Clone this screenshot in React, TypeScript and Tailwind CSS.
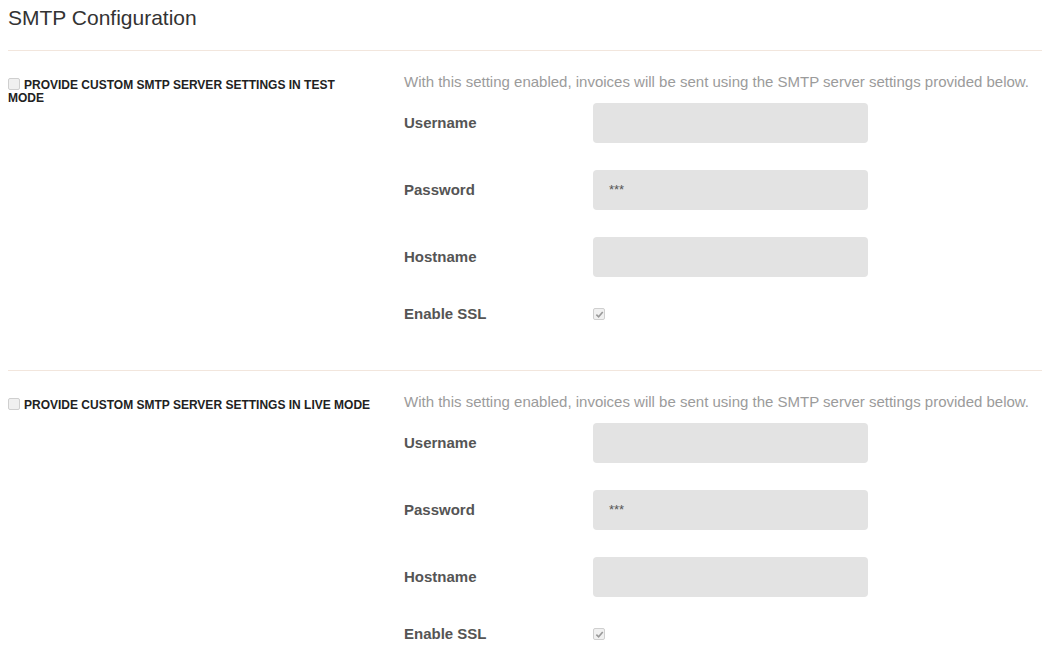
import React from "react";

const font = { fontFamily: '"Liberation Sans", Arial, Helvetica, sans-serif' };

function Box({ checked }: { checked?: boolean }) {
  return (
    <span className="inline-flex items-center justify-center w-[12px] h-[12px] border border-[#cfcfcf] bg-[#f0f0f0] rounded-[2px] align-[-1px]">
      {checked && (
        <svg width="9" height="9" viewBox="0 0 10 10">
          <path d="M1.5 5.2 L4 7.6 L8.6 2.2" fill="none" stroke="#9a9a9a" strokeWidth="1.8" />
        </svg>
      )}
    </span>
  );
}

function Row({ label, value }: { label: string; value?: string }) {
  return (
    <div className="flex items-center h-10">
      <div className="w-[189px] text-[15px] font-bold text-[#555]">{label}</div>
      <div className="w-[275px] h-10 bg-[#e3e3e3] rounded-[4px] flex items-center px-4 text-[13px] text-[#555]">
        {value}
      </div>
    </div>
  );
}

function Section({ mode }: { mode: string }) {
  return (
    <div className="border-t border-[#f2e6dd] flex pt-[21px] pb-[46px]">
      <div className="w-[396px] pr-[32px] pt-[6px]">
        <div className="text-[12px] leading-[13px] font-bold text-[#222] uppercase">
          <Box />
          <span className="ml-[4px]">Provide custom SMTP server settings in {mode} mode</span>
        </div>
      </div>
      <div className="flex-1">
        <div className="text-[15px] leading-5 text-[#9b9b9b]">
          With this setting enabled, invoices will be sent using the SMTP server settings provided below.
        </div>
        <div className="flex flex-col gap-[27px] mt-[11px]">
          <Row label="Username" />
          <Row label="Password" value="***" />
          <Row label="Hostname" />
        </div>
        <div className="flex items-center h-5 mt-[27px]">
          <div className="w-[189px] text-[15px] font-bold text-[#555]">Enable SSL</div>
          <Box checked />
        </div>
      </div>
    </div>
  );
}

export default function App() {
  return (
    <div className="bg-white min-h-[661px] pl-2" style={font}>
      <h2 className="text-[21px] leading-[24px] text-[#333] pt-[6px] pb-[20px]">SMTP Configuration</h2>
      <Section mode="test" />
      <Section mode="live" />
    </div>
  );
}
